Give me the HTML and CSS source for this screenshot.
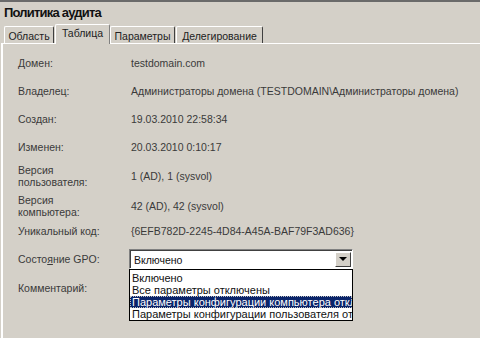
FILE: index.html
```html
<!DOCTYPE html>
<html lang="ru">
<head>
    <meta charset="UTF-8">
    <title>Политика аудита</title>
    <link rel="stylesheet" href="styles.css">
</head>
<body>
    <div class="window">
        <h1 class="title">Политика аудита</h1>

        <div class="tabs">
            <div class="tab t1">Область</div>
            <div class="tab t2 active">Таблица</div>
            <div class="tab t3">Параметры</div>
            <div class="tab t4">Делегирование</div>
        </div>

        <div class="panel">
            <div class="row"><span class="label">Домен:</span><span class="value">testdomain.com</span></div>
            <div class="row"><span class="label">Владелец:</span><span class="value">Администраторы домена (TESTDOMAIN\Администраторы домена)</span></div>
            <div class="row"><span class="label">Создан:</span><span class="value">19.03.2010 22:58:34</span></div>
            <div class="row"><span class="label">Изменен:</span><span class="value">20.03.2010 0:10:17</span></div>
            <div class="row tall"><span class="label">Версия<br>пользователя:</span><span class="value">1 (AD), 1 (sysvol)</span></div>
            <div class="row tall"><span class="label">Версия<br>компьютера:</span><span class="value">42 (AD), 42 (sysvol)</span></div>
            <div class="row uid"><span class="label">Уникальный код:</span><span class="value">{6EFB782D-2245-4D84-A45A-BAF79F3AD636}</span></div>
            <div class="row state">
                <span class="label">Состо<u>я</u>ние GPO:</span>
                <div class="combo">
                    <div class="combo-text">Включено</div>
                    <div class="combo-btn"><span class="arrow"></span></div>
                    <ul class="dropdown">
                        <li>Включено</li>
                        <li>Все параметры отключены</li>
                        <li class="selected">Параметры конфигурации компьютера отключены</li>
                        <li>Параметры конфигурации пользователя отключены</li>
                    </ul>
                </div>
            </div>
            <div class="row short"><span class="label">Комментарий:</span></div>
        </div>
    </div>
</body>
</html>
```

FILE: styles.css
```css
:root {
    --fon: #d4d0c8;
    --tekst: #3a3a3a;
    --ten: #808080;
    --svet: #ffffff;
    --vydelenie: #0a246a;
}

* {
    margin: 0;
    padding: 0;
    box-sizing: border-box;
}

body {
    background: var(--fon);
    font-family: "Liberation Sans", Arial, sans-serif;
    font-size: 10.5px;
    color: var(--tekst);
    width: 480px;
    height: 338px;
    overflow: hidden;
}

.window {
    border-top: 2px solid #6a6a6a;
    height: 100%;
    display: flex;
    flex-direction: column;
}

.title {
    height: 22px;
    padding: 3px 0 0 4px;
    font-size: 13px;
    letter-spacing: -0.8px;
    font-weight: bold;
    color: #111;
}

/* pestañas */
.tabs {
    display: flex;
    align-items: flex-end;
    height: 19px;
    padding-left: 4px;
}

.tab {
    height: 17px;
    padding-top: 3px;
    text-align: center;
    border-top: 1px solid var(--svet);
    border-left: 1px solid var(--svet);
    border-right: 1px solid #404040;
    border-radius: 2px 2px 0 0;
    color: #222;
    margin-right: 1px;
    white-space: nowrap;
}

.t1 { width: 50px; }
.t2 { width: 55px; }
.t3 { width: 65px; }
.t4 { width: 87px; }

.tab.active {
    height: 20px;
    padding-top: 2px;
    margin-right: 0;
    position: relative;
    top: 1px;
    background: var(--fon);
    border-right-color: var(--ten);
    z-index: 1;
}

.panel {
    flex: 1;
    border-top: 1px solid var(--svet);
    border-left: 2px solid var(--svet);
    margin-left: 1px;
    padding: 5px 0 0 15px;
}

.row {
    display: flex;
    align-items: center;
    height: 28px;
}

.row.tall {
    height: 30px;
}

.row.uid {
    height: 20px;
}

.row.short {
    height: 23px;
}

.row.state {
    height: 35px;
}

.label {
    width: 113px;
    flex-shrink: 0;
    line-height: 12px;
}

.value {
    white-space: nowrap;
}

/* combo */
.combo {
    position: relative;
    width: 224px;
    height: 20px;
    margin-left: -2px;
    display: flex;
    background: #fff;
    border-top: 1px solid var(--ten);
    border-left: 1px solid var(--ten);
    border-right: 1px solid var(--svet);
    border-bottom: 1px solid var(--svet);
    box-shadow: inset 1px 1px 0 #404040;
}

.combo-text {
    flex: 1;
    padding: 4px 0 0 4px;
    color: #111;
}

.combo-btn {
    width: 16px;
    margin: 2px 1px 1px 0;
    background: var(--fon);
    border-top: 1px solid var(--svet);
    border-left: 1px solid var(--svet);
    border-right: 1px solid #404040;
    border-bottom: 1px solid #404040;
    display: flex;
    align-items: center;
    justify-content: center;
}

.arrow {
    width: 0;
    height: 0;
    border-left: 4px solid transparent;
    border-right: 4px solid transparent;
    border-top: 4px solid #000;
}

.dropdown {
    position: absolute;
    top: 19px;
    left: -1px;
    width: 224px;
    list-style: none;
    background: #fff;
    border: 1px solid #000;
    padding-top: 2px;
    overflow: hidden;
}

.dropdown li {
    height: 12px;
    line-height: 12px;
    padding-left: 2px;
    white-space: nowrap;
    overflow: hidden;
    color: #111;
    font-size: 11px;
}

.dropdown li.selected {
    background: var(--vydelenie);
    color: #fff;
    outline: 1px dotted #c0c0c0;
    outline-offset: -1px;
}
```
